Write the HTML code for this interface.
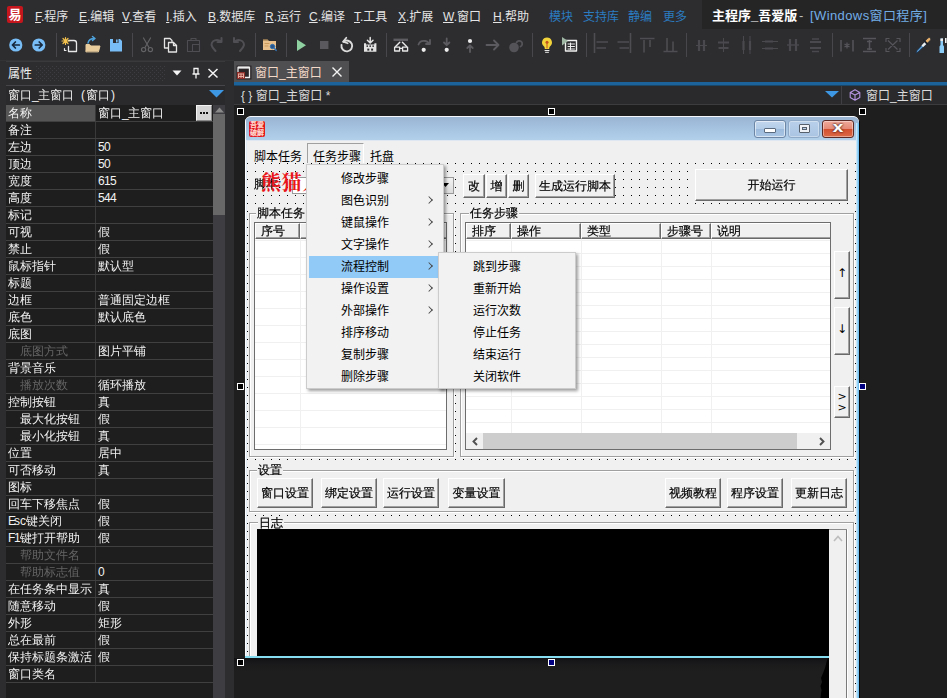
<!DOCTYPE html>
<html lang="zh-CN">
<head>
<meta charset="utf-8">
<title>主程序_吾爱版 - [Windows窗口程序]</title>
<style>
*{box-sizing:border-box;margin:0;padding:0}
html,body{width:947px;height:698px;overflow:hidden;background:#2d2d30}
body{position:relative;font-family:"Liberation Sans","Noto Sans CJK SC",sans-serif;font-size:12px;color:#e6e6e6}
.abs{position:absolute}
/* ---------- IDE menubar ---------- */
#menubar{position:absolute;left:0;top:0;width:947px;height:30px;background:#2d2d30}
#logo{position:absolute;left:7px;top:6px;width:16px;height:17px;border-radius:2px;background:#c4161c;color:#fff;font-size:13px;line-height:17px;text-align:center;font-weight:700;overflow:hidden}
.mi{position:absolute;top:8px;height:18px;line-height:18px;font-size:12px;color:#e4e4e4;white-space:nowrap}
.mi u{text-decoration:underline;text-underline-offset:1px}
.mi.bl{color:#2b7cc0}
#titlebox{position:absolute;left:702px;top:0;width:245px;height:29px;background:#252526}
#titlebox .t1{position:absolute;left:10px;top:7px;font-size:13px;line-height:18px;font-weight:700;color:#fff;white-space:nowrap}
#titlebox .t2{position:absolute;left:97px;top:7px;font-size:13px;line-height:18px;color:#bdbdbd;white-space:nowrap}
#titlebox .t3{position:absolute;left:108px;top:7px;font-size:13px;line-height:18px;color:#73aee6;white-space:nowrap;letter-spacing:.4px}
/* ---------- IDE toolbar ---------- */
#toolbar{position:absolute;left:0;top:30px;width:947px;height:30px;background:#2d2d30}
.sep{position:absolute;top:3px;width:1px;height:24px;background:#46464a}
.ic{position:absolute;overflow:visible}
#tbline{position:absolute;left:0;top:60px;width:234px;height:1px;background:#333336}
/* ---------- left property panel ---------- */
#left{position:absolute;left:0;top:61px;width:234px;height:637px;background:#2d2d30}
#lp{position:absolute;left:6px;top:0;width:219px;height:637px;background:#1e1e1e}
#lphead{position:absolute;left:0;top:0;width:219px;height:25px;background:#2d2d30;border-top:1px solid #3a3a3d;border-bottom:1px solid #46464a}
#lphead .tt{position:absolute;left:2px;top:3px;font-size:12px;line-height:18px;color:#f0f0f0}
#lpcombo{position:absolute;left:0;top:25px;width:219px;height:19px;background:#2a2a2c}
.a{display:inline-block;width:6px;text-align:center;font-weight:400;font-style:normal}
#lpcombo .tt{position:absolute;left:2px;top:0;line-height:19px;color:#f0f0f0;white-space:nowrap}
.sim{font-family:"Liberation Sans","WenQuanYi Zen Hei",sans-serif}
.pr{position:absolute;left:6px;width:207px;height:17px;border-bottom:1px solid #404040;background:#1e1e1e;font-family:"Liberation Sans","WenQuanYi Zen Hei",sans-serif;font-size:12px;line-height:16px;color:#f2f2f2;white-space:nowrap}
.pr .pn{position:absolute;left:0;top:0;width:89px;height:16px;padding-left:2px;overflow:hidden}
.pr .pn.ind{padding-left:14px}
.pr .pn.dim{color:#646464}
.pr .pv{position:absolute;left:89px;top:0;width:118px;height:16px;border-left:1px solid #393939;padding-left:2px;overflow:hidden}
.pr.sel .pn{background:#555555}
#lpscroll{position:absolute;left:213px;top:105px;width:12px;height:593px;background:#3e3e42}
#lpthumb{position:absolute;left:0;top:9px;width:12px;height:101px;background:#686868}
/* ---------- main ---------- */
#main{position:absolute;left:234px;top:61px;width:713px;height:637px;background:#1e1e1e}
#tabs{position:absolute;left:0;top:0;width:713px;height:21px;background:#2d2d30}
#tab{position:absolute;left:0;top:0;width:115px;height:21px;background:#4f4f52}
#tab .tt{position:absolute;left:21px;top:3px;line-height:19px;color:#f3d9c8;white-space:nowrap}
#tabline{position:absolute;left:0;top:21px;width:713px;height:4px;background:linear-gradient(#1d639b 0,#1d639b 75%,#1a4668 75%)}
#nav{position:absolute;left:0;top:25px;width:713px;height:19px;background:#2a2a2c;border-bottom:1px solid #3c3c3f}
#nav .tt{position:absolute;left:7px;top:1px;line-height:18px;color:#dcdcdc;white-space:nowrap}
#nav2{position:absolute;left:607px;top:0;width:106px;height:18px;border-left:1px solid #404044}
.hd{position:absolute;width:7px;height:7px;border:1px solid #fff;background:#000}
.hd.b{background:#000080}

/* ---------- form controls ---------- */
#win{position:absolute;left:0;top:0;width:947px;height:698px;background:none;color:#000;-webkit-text-stroke:.2px;font-family:"Liberation Sans","WenQuanYi Zen Hei",sans-serif;font-size:12px;overflow:hidden}
.fm{-webkit-text-stroke:0;font-family:"Liberation Sans","Noto Sans CJK SC",sans-serif;font-size:12px;line-height:16px;color:#000;white-space:nowrap}
.ft{font-size:12px;line-height:14px;white-space:nowrap}
.btn{background:#f0f0f0;border-top:1px solid #fff;border-left:1px solid #fff;border-right:1px solid #696969;border-bottom:1px solid #696969;box-shadow:inset -1px -1px 0 #a0a0a0;display:flex;align-items:center;justify-content:center;white-space:nowrap;font-size:12px}
.btn span{display:block;line-height:14px;margin-top:-1px}
.btn .ar{font-family:"DejaVu Sans",sans-serif;font-size:12px;-webkit-text-stroke:0}
.grp{background:#f0f0f0}
.grp .gb{position:absolute;left:0;right:1px;top:7px;bottom:1px;border:1px solid #a0a0a0;box-shadow:1px 1px 0 #fff,inset 1px 1px 0 #fff}
.grp .gl{position:absolute;left:7px;top:0;height:14px;line-height:14px;padding:0 1px;background:#f0f0f0;white-space:nowrap}
.lv{background-color:#fff;border:1px solid #6d6d6d;overflow:hidden}
.lh{height:16px;line-height:15px;padding-left:5px;background:#f0f0f0;border-right:1px solid #696969;border-bottom:1px solid #696969;border-left:1px solid #fff;border-top:1px solid #fff;box-shadow:inset -1px -1px 0 #a0a0a0;white-space:nowrap;overflow:hidden}
.pm{-webkit-text-stroke:0;background:#f2f2f2;border:1px solid #cccccc;box-shadow:2px 2px 3px rgba(0,0,0,.38);font-family:"Liberation Sans","Noto Sans CJK SC",sans-serif;font-size:12px;color:#000}
.pm .pi{position:absolute;left:2px;right:4px;height:22px;line-height:23px;padding-left:32px;white-space:nowrap}
.pm .pi.hl{background:#91c9f7}
.pm .pi i{position:absolute;right:7px;top:7px;width:6px;height:6px;border-right:1.5px solid #444;border-top:1.5px solid #444;transform:rotate(45deg) scale(.9)}
</style>
</head>
<body>
<div id="menubar">
  <div id="logo">易</div>
  <div class="mi" style="left:35px"><u>F</u>.程序</div>
  <div class="mi" style="left:79px"><u>E</u>.编辑</div>
  <div class="mi" style="left:122px"><u>V</u>.查看</div>
  <div class="mi" style="left:166px"><u>I</u>.插入</div>
  <div class="mi" style="left:208px"><u>B</u>.数据库</div>
  <div class="mi" style="left:265px"><u>R</u>.运行</div>
  <div class="mi" style="left:309px"><u>C</u>.编译</div>
  <div class="mi" style="left:354px"><u>T</u>.工具</div>
  <div class="mi" style="left:398px"><u>X</u>.扩展</div>
  <div class="mi" style="left:443px"><u>W</u>.窗口</div>
  <div class="mi" style="left:493px"><u>H</u>.帮助</div>
  <div class="mi bl" style="left:549px">模块</div>
  <div class="mi bl" style="left:583px">支持库</div>
  <div class="mi bl" style="left:628px">静编</div>
  <div class="mi bl" style="left:663px">更多</div>
  <div id="titlebox"><span class="t1">主程序_吾爱版</span><span class="t2">-</span><span class="t3">[Windows窗口程序]</span></div>
</div>
<div id="toolbar">
<svg class="abs" style="left:0;top:0" width="947" height="30" viewBox="0 30 947 30" fill="none" stroke-linecap="round" stroke-linejoin="round">
<!-- separators -->
<g stroke="#48484c" stroke-width="1" stroke-linecap="butt">
<path d="M56.5 33v24M132.5 33v24M255.5 33v24M286.5 33v24M386.5 33v24M532.5 33v24M586.5 33v24M686.5 33v24M832.5 33v24M909.5 33v24"/>
</g>
<!-- back / forward -->
<circle cx="15.8" cy="45" r="6.6" fill="#78bdf5"/>
<path d="M19.3 45h-6.6M15.4 42l-3 3 3 3" stroke="#16283c" stroke-width="1.7"/>
<circle cx="38.8" cy="45" r="6.6" fill="#78bdf5"/>
<path d="M35.3 45h6.6M39.2 42l3 3-3 3" stroke="#16283c" stroke-width="1.7"/>
<!-- new -->
<path d="M68.5 40.5h5.5a2.5 2.5 0 0 1 2.500 2.500v8.500h-8v-5" stroke="#e8e8e8" stroke-width="1.3"/>
<path d="M66 50.500h-1.500v-2" stroke="#e8e8e8" stroke-width="1.2"/>
<g stroke="#f3c14b" stroke-width="1.2"><path d="M65.500 37.500v7M62 41h7M63 38.500l5 5M68 38.500l-5 5"/></g>
<!-- open -->
<path d="M86 51.500l1.500-5.500h12.500l-1.500 5.500zM86 51v-6.500h3.500l1 1" fill="#e8cc9c" stroke="#e8cc9c" stroke-width="1"/>
<path d="M88 43c.5-3 3-4.500 6.500-4.500M92.500 36.500l2.500 2-2.500 2" stroke="#4fa3dd" stroke-width="1.5"/>
<!-- save -->
<path d="M110 39h10l2 2v10.500h-12z" fill="#78bdf5"/>
<rect x="113" y="39" width="5.500" height="4" fill="#2d2d30"/>
<rect x="116" y="39.500" width="1.600" height="3" fill="#78bdf5"/>
<!-- cut (disabled) -->
<g stroke="#636366" stroke-width="1.2"><path d="M143.500 38l5.500 9.500M150.500 38l-5.500 9.500"/><circle cx="143.600" cy="49.600" r="2.100"/><circle cx="150.400" cy="49.600" r="2.100"/></g>
<!-- copy -->
<g stroke="#e4e4e4" stroke-width="1.300"><path d="M164.500 38.500h5.500l2 2v7.500h-7.500z" fill="#2d2d30"/><path d="M168.500 42.500h5l3 3v6.500h-8z" fill="#2d2d30"/><path d="M173.500 42.500v3h3"/></g>
<!-- paste (disabled) -->
<g stroke="#4e4e52" stroke-width="1.100"><path d="M187.500 40.500h12v11h-12z"/><path d="M191 40.500v-2h5v2"/><path d="M192.500 44.500h7v7h-7z"/></g>
<!-- redo / undo (disabled) -->
<path d="M211.500 45c0-3.200 2.700-5 5.500-5 1.400 0 2.600.4 3.600 1.300M221.500 38v4h-4M211.500 45c.5 2.300 1.900 3.700 4 6" stroke="#505054" stroke-width="2"/>
<path d="M244 45c0-3.200-2.700-5-5.500-5-1.400 0-2.600.4-3.600 1.300M234 38v4h4M244 45c-.5 2.300-1.900 3.700-4 6" stroke="#505054" stroke-width="2"/>
<!-- folder find -->
<path d="M263 39.500h4.500l1.500 1.500h7v9h-13z" fill="#e8c08c"/><path d="M263 39.500h4.500l1 1h-5.500z" fill="#8a6a3c"/>
<path d="M265 43.500h4M265 46h3" stroke="#c99a5c" stroke-width="1"/>
<circle cx="272.500" cy="46.500" r="2.200" fill="#27558c" stroke="#3673b0" stroke-width="1"/>
<path d="M274.300 48.300l1.800 2" stroke="#3673b0" stroke-width="1.600"/>
<!-- play / stop -->
<path d="M297 39.500l9 5.800-9 5.800z" fill="#8fd1a0"/>
<rect x="320" y="41" width="8.400" height="8" fill="#5a5a5e"/>
<!-- restart -->
<path d="M343.4 41.8A5.400 5.400 0 1 1 341.500 45" stroke="#dcdcdc" stroke-width="1.900"/>
<path d="M346.300 37.700L343.200 41.600l4.500 1.700" stroke="#dcdcdc" stroke-width="1.700"/>
<!-- build -->
<path d="M370.200 37.500v4.500M367.400 40.200l2.800 2.800 2.800-2.800" stroke="#e4e4e4" stroke-width="1.500"/>
<path d="M364 43.200h2v1.300h8.400v-1.300h2v8.500h-12.400z" fill="#e4e4e4"/>
<g fill="#2d2d30"><rect x="366.500" y="45.400" width="1.500" height="1.500"/><rect x="369.450" y="45.400" width="1.500" height="1.500"/><rect x="372.400" y="45.400" width="1.500" height="1.500"/><rect x="367.300" y="48.600" width="2" height="2"/><rect x="371.100" y="48.600" width="2" height="2"/></g>
<!-- glasses -->
<path d="M393.500 39.800h14.500" stroke="#5e5e62" stroke-width="2.400" stroke-linecap="butt"/>
<path d="M399.800 42.300l-4.200 4.300M402.400 42.300l4.200 4.300" stroke="#e8e8e8" stroke-width="1.400"/>
<path d="M394.600 47.200h5v3.800h-5zM402.600 47.200h5v3.800h-5zM399.600 48.300h3" stroke="#e8e8e8" stroke-width="1.300"/>
<!-- step over / into / out -->
<path d="M418.500 44.500c1-3 4-4 7-3.500 1.500.3 2.700 1.200 3.500 2.500M430 40v4h-4" stroke="#5c5c60" stroke-width="1.800"/>
<circle cx="423.700" cy="49.800" r="2.100" fill="#ececec"/>
<path d="M446.700 38.500v6M444 42.500l2.700 2.700 2.700-2.700" stroke="#5c5c60" stroke-width="1.800"/>
<circle cx="446.700" cy="49.800" r="2.100" fill="#ececec"/>
<circle cx="470" cy="41" r="2.100" fill="#ececec"/>
<path d="M470 52v-6M467.300 48l2.700-2.700 2.700 2.700" stroke="#5c5c60" stroke-width="1.800"/>
<path d="M486.500 45h12M494 40.500l4.500 4.500-4.500 4.500" stroke="#5c5c60" stroke-width="1.800"/>
<!-- breakpoint-ish (disabled) -->
<circle cx="514" cy="47.500" r="4.800" fill="#545458"/>
<path d="M516.500 42.500a3 3 0 1 1 4 4" stroke="#545458" stroke-width="1.800"/>
<!-- bulb -->
<path d="M547 37.500a5 5 0 0 1 3.200 8.800c-.8.800-1 1.500-1 2.700h-4.400c0-1.200-.2-1.900-1-2.700a5 5 0 0 1 3.200-8.800z" fill="#f2d33a"/>
<circle cx="547" cy="42.300" r="1.500" fill="#c0541e"/>
<path d="M547 43.500v4.500" stroke="#c0541e" stroke-width="1"/>
<path d="M545 50.500h4M545.500 52.300h3" stroke="#e8e8e8" stroke-width="1"/>
<!-- form designer icon -->
<rect x="565.500" y="40.500" width="11" height="10.500" stroke="#f0f0f0" stroke-width="1.400"/>
<path d="M568 44h6.500M568 46.500h6.500M568 49h6.500M570.500 43v6.500" stroke="#f0f0f0" stroke-width="1"/>
<path d="M562 37v8.500l6-4.500z" fill="#9fb6a4"/>
<!-- align group 1 (disabled) -->
<g stroke="#4e4e52" stroke-width="1.600" stroke-linecap="butt">
<path d="M594.500 33v20M596.500 42h11.500M596.500 48h9.500"/>
<path d="M630.500 33v20M617.500 42h11.500M619.500 48h9.500"/>
<path d="M640 38.500h14.500M644 40v12.500M650 40v7"/>
<path d="M663.500 51.500h14M667 38v13M673 41.500v9.500"/>
</g>
<!-- align group 2 (disabled) -->
<g stroke="#4a4a4e" stroke-width="2.200" stroke-linecap="butt">
<path d="M699 40v11M704 40v11"/><path d="M696 45.500h11" stroke-width="1"/>
<path d="M718 42.500h11M718.500 48h10"/><path d="M723.500 38v14" stroke-width="1"/>
<path d="M743.500 41v9M750 41v9"/><path d="M743.500 36v18M750 36v18" stroke-width="1"/>
<path d="M765 41.500h8M765 48.500h8"/><path d="M762 41.500h16M762 48.500h16" stroke-width="1"/>
<path d="M790 39v12M796 39v12"/><path d="M787 45h12" stroke-width="1.400"/>
<path d="M810 42h11M810 48h11"/><path d="M812 39h7M812 51.500h7" stroke-width="1.400"/>
</g>
<!-- size icons (disabled) -->
<g stroke="#55555a" stroke-width="1.500" stroke-linecap="butt">
<path d="M841 40v11.500M853 40v11.500"/>
<path d="M847 42.500v6M844.500 44l5 3M849.500 44l-5 3" stroke-width="1.300"/>
<path d="M863 38.500h13M863 51.500h13M869.500 40v10M867 41.500h5M867 49h5"/>
<path d="M886 42v-3.500h3.500M896.500 38.500h3.500v3.500M900 48v3.500h-3.500M889.500 51.500h-3.500v-3.500M888 40.500l9.500 9M897.500 40.500l-9.500 9" stroke-width="1.200"/>
</g>
<!-- eyedropper -->
<path d="M916 53l1-2.500 7.500-8 1.800 1.800-8 7.500z" fill="#5aa0dc" stroke="#1d2f44" stroke-width=".8"/>
<path d="M921.500 45.500l3-3.200 1.800 1.800-3.200 3z" fill="#f0f0f0"/>
<path d="M925 41l3-3a1.600 1.600 0 0 1 2.300 2.300l-3 3z" fill="#e8b06a" stroke="#30343a" stroke-width=".8"/>
<path d="M923.800 40.300l3.800 3.800" stroke="#20242a" stroke-width="1.600"/>
<!-- bottle -->
<path d="M940.500 38.500h2.500v6.500l1 1.500v6.500h-4.500v-6.500l1-1.500z" fill="#8ccdf8"/>
<path d="M940.500 38.500h2.500v2.500h-2.500z" fill="#f0f0f0"/>
<path d="M945.800 38v5" stroke="#f0f0f0" stroke-width="1.600" stroke-linecap="butt"/>
</svg>

</div>
<div id="tbline"></div>

<div id="left">
  <div id="lp">
    <div id="lphead"><span class="tt">属性</span>
      <svg class="abs" style="left:30px;top:4px" width="130" height="16"><defs><pattern id="hx" width="4" height="4" patternUnits="userSpaceOnUse"><rect x="0" y="0" width="1" height="1" fill="#3e3e42"/><rect x="2" y="2" width="1" height="1" fill="#3e3e42"/></pattern></defs><rect width="130" height="16" fill="url(#hx)"/></svg>
      <svg class="abs" style="left:166px;top:8px" width="10" height="6"><path d="M.5 .5h9L5 5.500z" fill="#f4f4f4"/></svg>
      <svg class="abs" style="left:185px;top:5px" width="10" height="12"><path d="M3 1.500h4v5.500h-4zM1.500 7h7M5 7v4.500" fill="none" stroke="#f4f4f4" stroke-width="1.300"/></svg>
      <svg class="abs" style="left:201px;top:6px" width="12" height="11"><path d="M1.500 1l9 8.500M10.500 1l-9 8.500" fill="none" stroke="#f4f4f4" stroke-width="1.500"/></svg>
    </div>
    <div id="lpcombo"><span class="tt sim">窗口<b class="a">_</b>主窗口<b class="a"> </b><b class="a">(</b>窗口<b class="a">)</b></span><svg class="abs" style="left:203px;top:4px" width="15" height="8"><path d="M0 0h15L7.500 7.500z" fill="#3d97e2"/></svg></div>
  </div>
</div>
<div class="pr sel" style="top:105px"><span class="pn">名称</span><span class="pv">窗口<b class="a">_</b>主窗口</span></div>
<div class="pr" style="top:122px"><span class="pn">备注</span><span class="pv"></span></div>
<div class="pr" style="top:139px"><span class="pn">左边</span><span class="pv"><b class="a">5</b><b class="a">0</b></span></div>
<div class="pr" style="top:156px"><span class="pn">顶边</span><span class="pv"><b class="a">5</b><b class="a">0</b></span></div>
<div class="pr" style="top:173px"><span class="pn">宽度</span><span class="pv"><b class="a">6</b><b class="a">1</b><b class="a">5</b></span></div>
<div class="pr" style="top:190px"><span class="pn">高度</span><span class="pv"><b class="a">5</b><b class="a">4</b><b class="a">4</b></span></div>
<div class="pr" style="top:207px"><span class="pn">标记</span><span class="pv"></span></div>
<div class="pr" style="top:224px"><span class="pn">可视</span><span class="pv">假</span></div>
<div class="pr" style="top:241px"><span class="pn">禁止</span><span class="pv">假</span></div>
<div class="pr" style="top:258px"><span class="pn">鼠标指针</span><span class="pv">默认型</span></div>
<div class="pr" style="top:275px"><span class="pn">标题</span><span class="pv"></span></div>
<div class="pr" style="top:292px"><span class="pn">边框</span><span class="pv">普通固定边框</span></div>
<div class="pr" style="top:309px"><span class="pn">底色</span><span class="pv">默认底色</span></div>
<div class="pr" style="top:326px"><span class="pn">底图</span><span class="pv"></span></div>
<div class="pr" style="top:343px"><span class="pn ind dim">底图方式</span><span class="pv">图片平铺</span></div>
<div class="pr" style="top:360px"><span class="pn">背景音乐</span><span class="pv"></span></div>
<div class="pr" style="top:377px"><span class="pn ind dim">播放次数</span><span class="pv">循环播放</span></div>
<div class="pr" style="top:394px"><span class="pn">控制按钮</span><span class="pv">真</span></div>
<div class="pr" style="top:411px"><span class="pn ind">最大化按钮</span><span class="pv">假</span></div>
<div class="pr" style="top:428px"><span class="pn ind">最小化按钮</span><span class="pv">真</span></div>
<div class="pr" style="top:445px"><span class="pn">位置</span><span class="pv">居中</span></div>
<div class="pr" style="top:462px"><span class="pn">可否移动</span><span class="pv">真</span></div>
<div class="pr" style="top:479px"><span class="pn">图标</span><span class="pv"></span></div>
<div class="pr" style="top:496px"><span class="pn">回车下移焦点</span><span class="pv">假</span></div>
<div class="pr" style="top:513px"><span class="pn"><b class="a">E</b><b class="a">s</b><b class="a">c</b>键关闭</span><span class="pv">假</span></div>
<div class="pr" style="top:530px"><span class="pn"><b class="a">F</b><b class="a">1</b>键打开帮助</span><span class="pv">假</span></div>
<div class="pr" style="top:547px"><span class="pn ind dim">帮助文件名</span><span class="pv"></span></div>
<div class="pr" style="top:564px"><span class="pn ind dim">帮助标志值</span><span class="pv"><b class="a">0</b></span></div>
<div class="pr" style="top:581px"><span class="pn">在任务条中显示</span><span class="pv">真</span></div>
<div class="pr" style="top:598px"><span class="pn">随意移动</span><span class="pv">假</span></div>
<div class="pr" style="top:615px"><span class="pn">外形</span><span class="pv">矩形</span></div>
<div class="pr" style="top:632px"><span class="pn">总在最前</span><span class="pv">假</span></div>
<div class="pr" style="top:649px"><span class="pn">保持标题条激活</span><span class="pv">假</span></div>
<div class="pr" style="top:666px"><span class="pn">窗口类名</span><span class="pv"></span></div>
<div id="lpscroll"><svg class="abs" style="left:2px;top:2px" width="9" height="6"><path d="M0 5.500L4.500 .5 9 5.500z" fill="#8a8a8a"/></svg><div id="lpthumb"></div></div>
<div class="abs" style="left:196px;top:105px;width:16px;height:16px;background:#d4d4d4;border:1px solid #f4f4f4;border-right-color:#8a8a8a;border-bottom-color:#8a8a8a"><div class="abs" style="left:3px;top:6px;width:2px;height:2px;background:#111;box-shadow:3px 0 0 #111,6px 0 0 #111"></div></div>

<div id="main">
  <div id="tabs"><div id="tab"><svg class="abs" style="left:2px;top:4px" width="16" height="15"><rect x=".5" y=".5" width="15" height="14" fill="#2a2426"/><path d="M2 8V2.500h11.500v10H9" fill="none" stroke="#ededed" stroke-width="1.300"/><path d="M2 2.500h11.500" stroke="#ededed" stroke-width="2"/><rect x="1" y="7" width="8" height="7" fill="#8a2c28"/><path d="M2.500 9h5M2.500 11.500h5M5 8.500v4.500M2.500 8.500v4.500M7.500 8.500v4.500" stroke="#f0b8a8" stroke-width=".9"/></svg><span class="tt">窗口_主窗口</span><svg class="abs" style="left:97px;top:5px" width="12" height="12"><path d="M1.500 1.500l9 9M10.500 1.500l-9 9" fill="none" stroke="#f4f4f4" stroke-width="1.400"/></svg></div></div>
  <div id="tabline"></div>
  <div id="nav"><span class="tt">{ } 窗口_主窗口 *</span><svg class="abs" style="left:591px;top:5px" width="14" height="7"><path d="M0 0h14L7 6.500z" fill="#3d97e2"/></svg><div id="nav2"><svg class="abs" style="left:7px;top:3px" width="12" height="12"><path d="M6 .8l4.800 2.600v5.200L6 11.200 1.200 8.600V3.400zM1.200 3.400L6 6l4.800-2.600M6 6v5.200" fill="none" stroke="#b694e0" stroke-width="1.100" stroke-linejoin="round"/></svg><span class="tt" style="left:24px">窗口_主窗口</span></div></div>
</div>

<div id="win">
<!-- ===== designed window frame ===== -->
<div class="abs" style="left:245px;top:116px;width:614px;height:582px;background:#f0f0f0;border-radius:6px 6px 0 0;overflow:hidden">
  <div class="abs" style="left:0;top:0;width:614px;height:25px;background:linear-gradient(#99b4d2,#a3c0de 40%,#b2d0ea);border-top:1px solid #f4f8fc;border-bottom:1px solid #dfe8f2;border-radius:6px 6px 0 0"></div>
  <div class="abs" style="left:0;top:0;width:1px;height:582px;background:#fafcfe"></div>
  <div class="abs" style="left:1px;top:25px;width:1px;height:557px;background:#e2ecf7"></div>
  <div class="abs" style="left:611px;top:7px;width:3px;height:575px;background:linear-gradient(90deg,#e0f1fc,#98d2f5 50%,#62b6ec)"></div>
  <!-- title icon -->
  <div class="abs" style="left:4px;top:5px;width:16px;height:16px;background:#e0161c;border-radius:2px;color:#ffd9d0;font-size:7px;line-height:8px;font-weight:700;text-align:center;letter-spacing:0;overflow:hidden;font-family:'Liberation Sans','Noto Sans CJK SC',sans-serif">吾爱<br>破解</div>
  <!-- caption buttons -->
  <div class="abs" style="left:509px;top:4px;width:32px;height:18px;border:1px solid #6d86a6;border-radius:3px;background:linear-gradient(#c3d7ee 0,#b3cce8 48%,#9dbbdc 52%,#a9c5e4 100%);box-shadow:inset 0 0 0 1px rgba(255,255,255,.55)">
    <div class="abs" style="left:9px;top:7px;width:12px;height:5px;background:#fff;border:1px solid #5a6b80;border-radius:1px"></div>
  </div>
  <div class="abs" style="left:543px;top:4px;width:32px;height:18px;border:1px solid #8fa9c8;border-radius:3px;background:linear-gradient(#b9d0ea,#a9c4e2);box-shadow:inset 0 0 0 1px rgba(255,255,255,.35)">
    <div class="abs" style="left:10px;top:3px;width:11px;height:9px;background:#eef2f6;border:1px solid #55606c;border-radius:1px"><div class="abs" style="left:2px;top:2px;width:5px;height:3px;border:1px solid #55606c;background:#b9d0ea"></div></div>
  </div>
  <div class="abs" style="left:577px;top:4px;width:32px;height:18px;border:1px solid #5b2a26;border-radius:3px;background:linear-gradient(#eea99a 0,#e58b78 48%,#d2502f 52%,#dc6a48 100%);box-shadow:inset 0 0 0 1px rgba(255,255,255,.4);color:#fff;font-family:'Liberation Sans',sans-serif;font-weight:700;font-size:14px;line-height:13px;text-align:center;text-shadow:0 0 1px #4a1a14,0 0 1px #4a1a14,0 0 2px #4a1a14"><span style="display:inline-block;transform:scaleX(1.35)">x</span></div>
</div>

<div class="abs" style="left:859px;top:121px;width:1px;height:577px;background:#050505"></div>
<!-- dotted design grid -->
<div class="abs" style="left:247px;top:163px;width:609px;height:535px;background-image:linear-gradient(90deg,transparent 1px,#f0f0f0 1px),linear-gradient(#000 1px,#f0f0f0 1px);background-size:8px 8px"></div>

<!-- form menubar -->
<div class="abs fm" style="left:254px;top:149px">脚本任务</div>
<div class="abs" style="left:307px;top:143px;width:57px;height:20px;background:#f0f0f0;border:1px solid #a0a0a0;border-right-color:#fff;border-bottom:none"></div>
<div class="abs fm" style="left:313px;top:149px">任务步骤</div>
<div class="abs fm" style="left:370px;top:149px">托盘</div>

<!-- toolbar row -->
<div class="abs ft" style="left:254px;top:177px">脚本:</div>
<div class="abs" style="left:292px;top:177px;width:162px;height:17px;background:#fff;border:1px solid #9a9a9a"></div>
<div class="abs" style="left:436px;top:178px;width:17px;height:15px;background:linear-gradient(#f2f2f2,#dcdcdc);border-left:1px solid #8a8a8a"><svg class="abs" style="left:5px;top:5px" width="7" height="4"><path d="M0 0h7L3.5 4z" fill="#000"/></svg></div>
<div class="abs" style="left:261px;top:171px;font-family:'Liberation Serif','Noto Serif CJK SC',serif;font-weight:700;font-size:20px;line-height:24px;color:#e8141a;white-space:nowrap;letter-spacing:.6px;-webkit-text-stroke:0">熊猫人</div>

<div class="abs btn" style="left:463px;top:174px;width:22px;height:24px"><span>改</span></div>
<div class="abs btn" style="left:486px;top:174px;width:21px;height:24px"><span>增</span></div>
<div class="abs btn" style="left:508px;top:174px;width:21px;height:24px"><span>删</span></div>
<div class="abs btn" style="left:535px;top:174px;width:80px;height:24px"><span>生成运行脚本</span></div>
<div class="abs btn" style="left:695px;top:169px;width:153px;height:32px"><span>开始运行</span></div>

<!-- group 1 -->
<div class="abs grp" style="left:249px;top:206px;width:206px;height:252px"><div class="gb"></div><div class="gl">脚本任务</div></div>
<div class="abs lv" style="left:254px;top:222px;width:193px;height:228px;background-image:linear-gradient(#fff 16px,#f0f0f0 16px);background-size:100% 17px;background-position:0 18px">
  <div class="abs lh" style="left:0;top:0;width:45px">序号</div>
  <div class="abs lh" style="left:45px;top:0;width:149px"></div>
  <div class="abs" style="left:45px;top:16px;width:1px;height:210px;background:#f0f0f0"></div>
</div>

<!-- group 2 -->
<div class="abs grp" style="left:460px;top:206px;width:395px;height:252px"><div class="gb"></div><div class="gl" style="left:9px">任务步骤</div></div>
<div class="abs lv" style="left:465px;top:222px;width:366px;height:228px;background-image:linear-gradient(#fff 12px,#f0f0f0 12px);background-size:100% 13px;background-position:0 18px">
  <div class="abs lh" style="left:0;top:0;width:45px">排序</div>
  <div class="abs lh" style="left:45px;top:0;width:70px">操作</div>
  <div class="abs lh" style="left:115px;top:0;width:80px">类型</div>
  <div class="abs lh" style="left:195px;top:0;width:50px">步骤号</div>
  <div class="abs lh" style="left:245px;top:0;width:122px">说明</div>
  <div class="abs" style="left:45px;top:16px;width:1px;height:195px;background:#f0f0f0"></div>
  <div class="abs" style="left:115px;top:16px;width:1px;height:195px;background:#f0f0f0"></div>
  <div class="abs" style="left:195px;top:16px;width:1px;height:195px;background:#f0f0f0"></div>
  <div class="abs" style="left:245px;top:16px;width:1px;height:195px;background:#f0f0f0"></div>
  <div class="abs" style="left:0;top:210px;width:364px;height:16px;background:#f0f0f0">
    <div class="abs" style="left:17px;top:0;width:314px;height:16px;background:#cdcdcd"></div>
    <svg class="abs" style="left:5px;top:4px" width="8" height="9"><path d="M6 1L2.500 4.500 6 8" fill="none" stroke="#505050" stroke-width="1.900"/></svg>
    <svg class="abs" style="left:352px;top:4px" width="8" height="9"><path d="M2 1l3.500 3.500L2 8" fill="none" stroke="#505050" stroke-width="1.900"/></svg>
  </div>
</div>
<div class="abs btn" style="left:834px;top:251px;width:16px;height:48px;padding-bottom:3px"><span class="ar">↑</span></div>
<div class="abs btn" style="left:834px;top:307px;width:16px;height:48px;padding-bottom:3px"><span class="ar">↓</span></div>
<div class="abs btn" style="left:834px;top:386px;width:16px;height:32px"><span class="ar" style="line-height:11px;font-size:11px">&gt;<br>&gt;</span></div>

<!-- group 3 -->
<div class="abs grp" style="left:249px;top:463px;width:606px;height:50px"><div class="gb"></div><div class="gl" style="left:8px">设置</div></div>
<div class="abs btn" style="left:257px;top:478px;width:56px;height:30px"><span>窗口设置</span></div>
<div class="abs btn" style="left:321px;top:478px;width:56px;height:30px"><span>绑定设置</span></div>
<div class="abs btn" style="left:383px;top:478px;width:56px;height:30px"><span>运行设置</span></div>
<div class="abs btn" style="left:448px;top:478px;width:57px;height:30px"><span>变量设置</span></div>
<div class="abs btn" style="left:665px;top:478px;width:56px;height:30px"><span>视频教程</span></div>
<div class="abs btn" style="left:727px;top:478px;width:56px;height:30px"><span>程序设置</span></div>
<div class="abs btn" style="left:791px;top:478px;width:56px;height:30px"><span>更新日志</span></div>

<!-- group 4 -->
<div class="abs grp" style="left:249px;top:516px;width:606px;height:182px"><div class="gb" style="top:6px;bottom:-4px"></div><div class="gl" style="left:9px">日志</div></div>
<div class="abs" style="left:257px;top:529px;width:572px;height:169px;background:#000"></div>
<div class="abs" style="left:829px;top:529px;width:17px;height:169px;background:#f0f0f0"><svg class="abs" style="left:4px;top:6px" width="10" height="7"><path d="M1 6l4-4.5L9 6" fill="none" stroke="#bdbdbd" stroke-width="1.6"/></svg></div>
<div class="abs" style="left:846px;top:529px;width:1px;height:169px;background:#7a7a7a"></div>
<div class="abs" style="left:829px;top:529px;width:18px;height:1px;background:#8c8c8c"></div>
<div class="abs" style="left:847px;top:529px;width:1px;height:169px;background:#fff"></div>

<!-- clipped lower part (designer glitch) -->
<div class="abs" style="left:245px;top:656px;width:584px;height:2px;background:#86dcf0"></div>
<div class="abs" style="left:234px;top:658px;width:595px;height:40px;background:linear-gradient(#121214 0,#1a1a1c 6px,#1e1e1e 13px)"></div>
<svg class="abs" style="left:818px;top:658px" width="11" height="40"><path d="M11 0v40H2.500l1-8-1-4 1.500-4-1-4 2.500-6 1.500-4 1.500-6 1.500-4z" fill="#000"/></svg>

<!-- popup menus -->
<div class="abs pm" style="left:306px;top:164px;width:138px;height:225px">
  <div class="pi" style="top:3px">修改步骤</div>
  <div class="pi" style="top:25px">图色识别<i></i></div>
  <div class="pi" style="top:47px">键鼠操作<i></i></div>
  <div class="pi" style="top:69px">文字操作<i></i></div>
  <div class="pi hl" style="top:91px">流程控制<i></i></div>
  <div class="pi" style="top:113px">操作设置<i></i></div>
  <div class="pi" style="top:135px">外部操作<i></i></div>
  <div class="pi" style="top:157px">排序移动</div>
  <div class="pi" style="top:179px">复制步骤</div>
  <div class="pi" style="top:201px">删除步骤</div>
</div>
<div class="abs pm" style="left:438px;top:252px;width:138px;height:137px">
  <div class="pi" style="top:3px">跳到步骤</div>
  <div class="pi" style="top:25px">重新开始</div>
  <div class="pi" style="top:47px">运行次数</div>
  <div class="pi" style="top:69px">停止任务</div>
  <div class="pi" style="top:91px">结束运行</div>
  <div class="pi" style="top:113px">关闭软件</div>
</div>

</div>

<div class="hd" style="left:237px;top:108px"></div>
<div class="hd" style="left:548px;top:108px"></div>
<div class="hd" style="left:859px;top:108px"></div>
<div class="hd" style="left:237px;top:383px"></div>
<div class="hd b" style="left:859px;top:383px"></div>
<div class="hd" style="left:237px;top:659px"></div>
<div class="hd b" style="left:548px;top:659px"></div>
</body>
</html>
